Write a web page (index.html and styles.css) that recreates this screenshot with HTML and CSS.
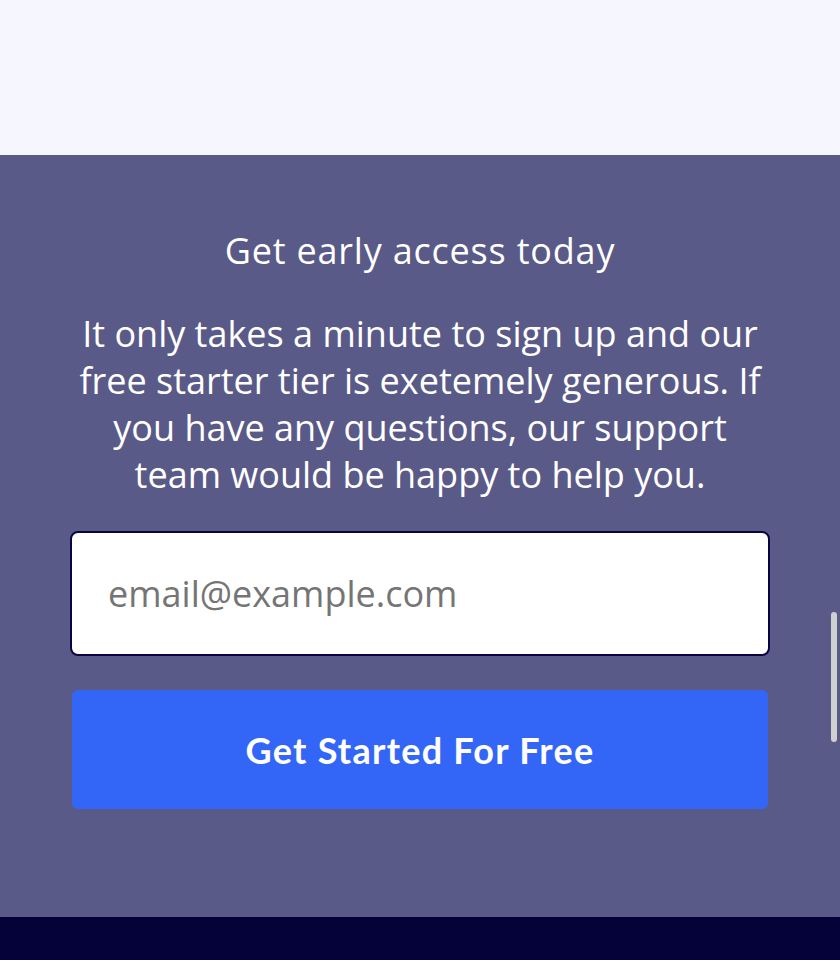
FILE: index.html
```html
<!DOCTYPE html>
<html lang="en">
<head>
<meta charset="utf-8">
<title>Get early access</title>
<link rel="stylesheet" href="styles.css">
</head>
<body>
<div class="top"></div>
<section class="cta">
  <h2 class="cta-title">Get early access today</h2>
  <p class="cta-text">It only takes a minute to sign up and our free starter tier is exetemely generous. If you have any questions, our support team would be happy to help you.</p>
  <form class="cta-form">
    <input class="cta-input" type="email" placeholder="email@example.com">
    <button class="cta-button" type="button">Get Started For Free</button>
  </form>
</section>
<footer class="footer"></footer>
<div class="scrollbar"></div>
</body>
</html>
```
FILE: styles.css
```css
html, body {
  margin: 0;
  padding: 0;
}
body {
  font-family: "Open Sans", "Noto Sans", sans-serif;
  background: #05023a;
}
.top {
  height: 155px;
  background: #f5f6fe;
}
.cta {
  background: #5a5a88;
  height: 762px;
  box-sizing: border-box;
  padding: 72px 70px 0;
  display: flex;
  flex-direction: column;
  align-items: center;
  color: #ffffff;
  text-align: center;
}
.cta-title {
  margin: 0;
  font-size: 36px;
  font-weight: 400;
  line-height: 48px;
  letter-spacing: 0.8px;
}
.cta-text {
  margin: 35px 0 0;
  font-size: 36px;
  line-height: 47px;
  padding: 0 4px;
}
.cta-form {
  margin-top: 33px;
  width: 100%;
  display: flex;
  flex-direction: column;
  gap: 34px;
  align-items: stretch;
}
.cta-input {
  height: 125px;
  box-sizing: border-box;
  border: 2px solid #0a0540;
  border-radius: 8px;
  padding: 0 36px;
  font-family: "Open Sans", sans-serif;
  font-size: 36px;
  background: #ffffff;
  outline: none;
}
.cta-input::placeholder {
  color: #757575;
}
.cta-button {
  margin: 0 2px;
  height: 119px;
  border: none;
  border-radius: 6px;
  background: #3366f6;
  color: #ffffff;
  font-family: "Lato", sans-serif;
  font-weight: 700;
  font-size: 36px;
  letter-spacing: 1.25px;
}
.footer {
  height: 43px;
  background: #05023a;
}
.scrollbar {
  position: absolute;
  left: 831px;
  top: 612px;
  width: 6px;
  height: 130px;
  border-radius: 3px;
  background: #d0d0d0;
}
```
